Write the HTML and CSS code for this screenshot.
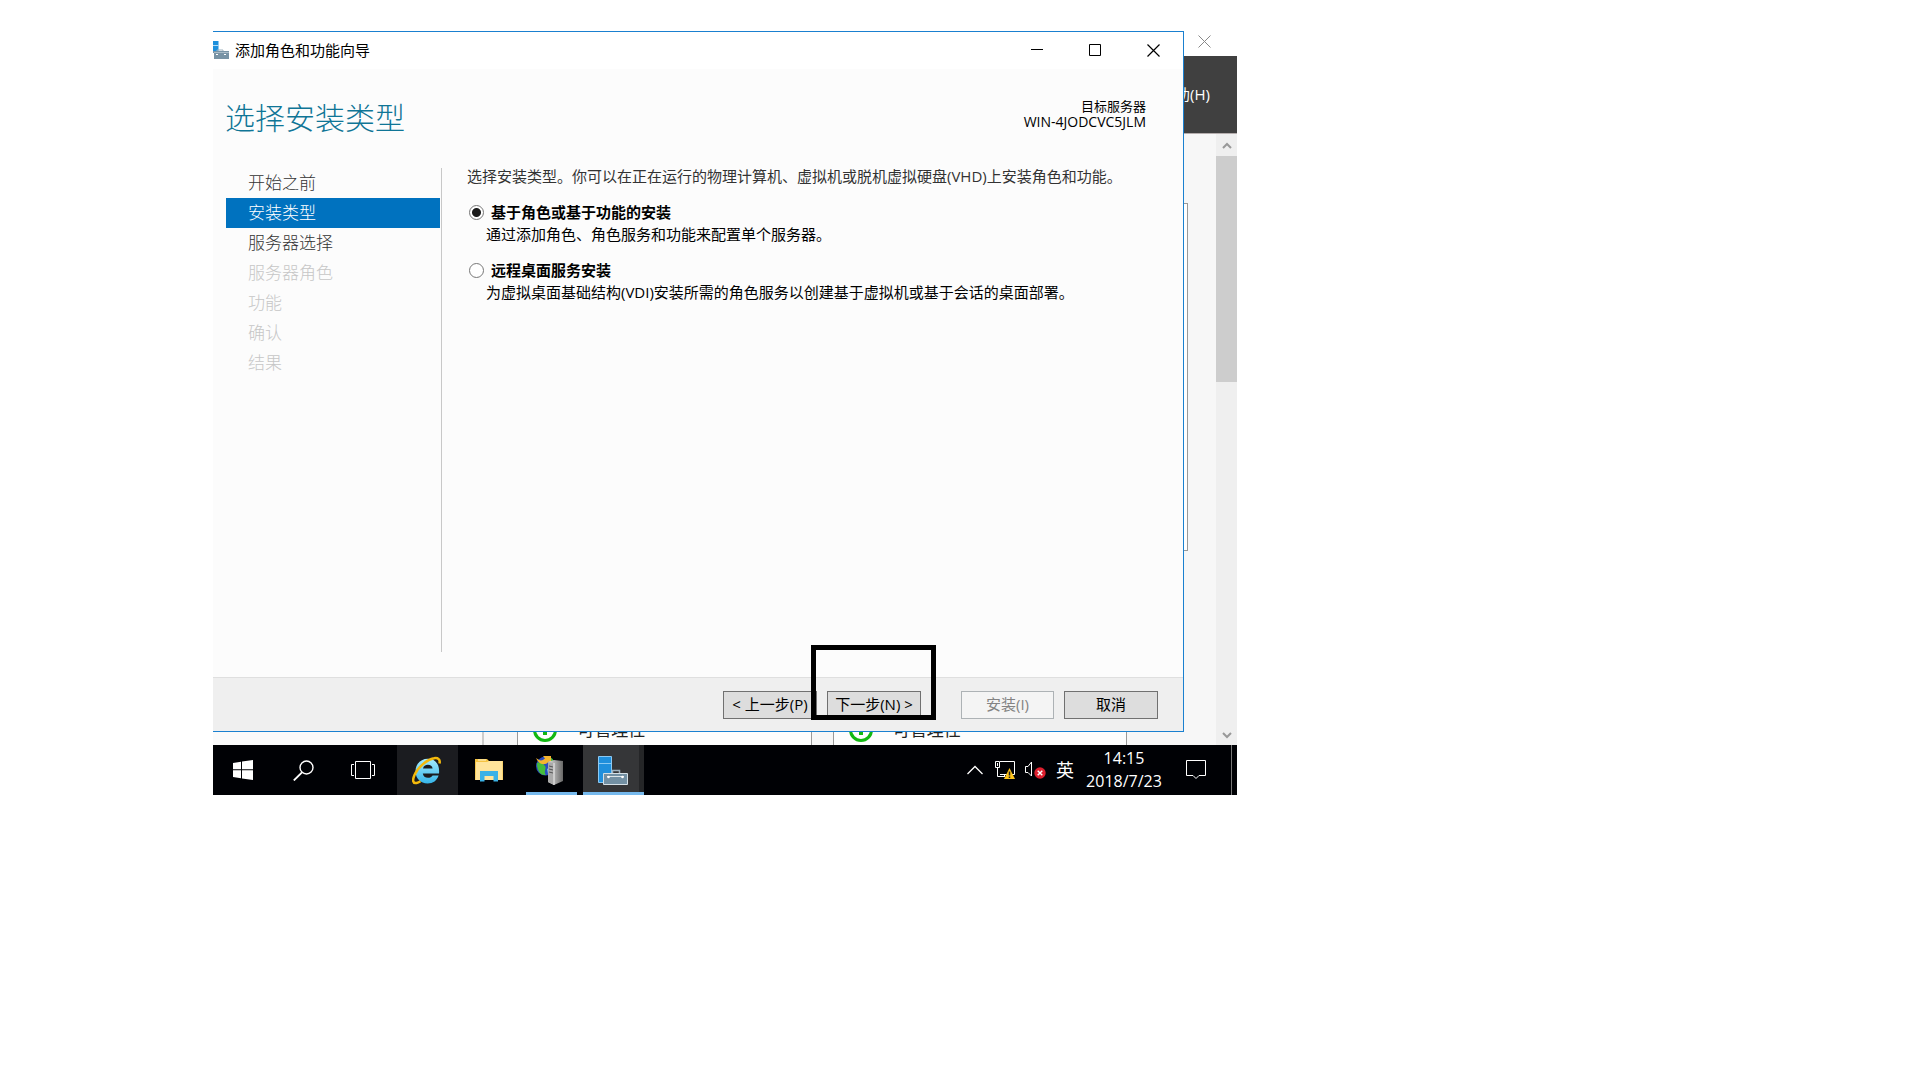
FILE: index.html
```html
<!DOCTYPE html>
<html lang="zh-CN">
<head>
<meta charset="utf-8">
<title>添加角色和功能向导</title>
<link rel="stylesheet" href="styles.css">
</head>
<body>
<main class="desktop">
  <div class="workspace">
    <section class="manager" aria-label="服务器管理器">
      <div class="manager-title">
        <button class="manager-close" aria-label="关闭"><svg width="13" height="13" viewBox="0 0 13 13"><path d="M.5.5l12 12M12.500.5l-12 12" stroke="#888" fill="none"/></svg></button>
      </div>
      <div class="manager-menu">帮助(H)</div>
      <div class="manager-main">
        <div class="manager-content">
          <div class="welcome"></div>
          <div class="tiles">
            <div class="tile-side"></div>
            <div class="tile"><svg width="24" height="24" viewBox="0 0 24 24"><circle cx="12" cy="12" r="10.500" fill="#fff" stroke="#12b812" stroke-width="3"/><path d="M12 6v11" stroke="#12b812" stroke-width="4"/></svg>可管理性</div>
            <div class="tile"><svg width="24" height="24" viewBox="0 0 24 24"><circle cx="12" cy="12" r="10.500" fill="#fff" stroke="#12b812" stroke-width="3"/><path d="M12 6v11" stroke="#12b812" stroke-width="4"/></svg>可管理性</div>
          </div>
        </div>
        <div class="scrollbar">
          <div class="scroll-arrow"><svg width="10" height="7" viewBox="0 0 10 7"><path d="M1 6l4-4 4 4" stroke="#999" stroke-width="2" fill="none"/></svg></div>
          <div class="scroll-thumb"></div>
          <div class="scroll-arrow scroll-down"><svg width="10" height="7" viewBox="0 0 10 7"><path d="M1 1l4 4 4-4" stroke="#999" stroke-width="2" fill="none"/></svg></div>
        </div>
      </div>
    </section>

    <section class="wizard">
      <div class="titlebar">
        <svg width="16" height="20" viewBox="0 0 16 20"><path d="M0 0h5.500v10H0z" fill="#1e90dc"/><path d="M0 4.500h5.500" stroke="#b5dcf5"/><path d="M4 10.500V9h6v1.500" stroke="#9db0bc" fill="none"/><path d="M0 10h16v8H1v-6H0z" fill="#7893a5"/><path d="M1 11.500h15" stroke="#a9bbc7"/><path d="M3 13.500h2M11 13.500h2" stroke="#fff"/></svg>
        <span class="title">添加角色和功能向导</span>
        <button class="chrome" aria-label="最小化"><svg width="13" height="13" viewBox="0 0 13 13"><path d="M0 5.500h12" stroke="#000"/></svg></button>
        <button class="chrome" aria-label="最大化"><svg width="13" height="13" viewBox="0 0 13 13"><path d="M.5.5h11v11H.5z" stroke="#000" fill="none"/></svg></button>
        <button class="chrome" aria-label="关闭"><svg width="13" height="13" viewBox="0 0 13 13"><path d="M.5.5l12 12M12.500.5l-12 12" stroke="#000" stroke-width="1.200" fill="none"/></svg></button>
      </div>
      <header class="head">
        <h1>选择安装类型</h1>
        <p class="target">目标服务器<br><span class="host">WIN-4JODCVC5JLM</span></p>
      </header>
      <div class="body">
        <nav class="steps">
          <a href="#before">开始之前</a>
          <a href="#type" class="current" aria-current="step">安装类型</a>
          <a href="#server">服务器选择</a>
          <a class="off" aria-disabled="true">服务器角色</a>
          <a class="off" aria-disabled="true">功能</a>
          <a class="off" aria-disabled="true">确认</a>
          <a class="off" aria-disabled="true">结果</a>
        </nav>
        <div class="content">
          <p class="intro">选择安装类型。你可以在正在运行的物理计算机、虚拟机或脱机虚拟硬盘(VHD)上安装角色和功能。</p>
          <div class="option">
            <label><input type="radio" name="type" checked>基于角色或基于功能的安装</label>
            <p>通过添加角色、角色服务和功能来配置单个服务器。</p>
          </div>
          <div class="option">
            <label><input type="radio" name="type">远程桌面服务安装</label>
            <p>为虚拟桌面基础结构(VDI)安装所需的角色服务以创建基于虚拟机或基于会话的桌面部署。</p>
          </div>
        </div>
      </div>
      <footer class="actions">
        <button class="btn">&lt; 上一步(P)</button>
        <div class="marked"><button class="btn">下一步(N) &gt;</button><span class="marker"></span></div>
        <button class="btn install" disabled>安装(I)</button>
        <button class="btn">取消</button>
      </footer>
    </section>
  </div>

  <div class="taskbar">
    <button class="task" aria-label="开始"><svg width="20" height="20" viewBox="0 0 20 20"><path d="M0 3l8-1.200V9.300H0zM9 1.600L20 0v9.300H9zM0 10.300h8v7.900L0 17zM9 10.300h11V20L9 18.400z" fill="#fff"/></svg></button>
    <button class="task" aria-label="搜索"><svg width="21" height="21" viewBox="0 0 21 21"><circle cx="13.500" cy="7.500" r="6.500" stroke="#fff" stroke-width="1.400" fill="none"/><path d="M9 12.300L.8 20.500" stroke="#fff" stroke-width="1.800"/></svg></button>
    <button class="task" aria-label="任务视图"><svg width="24" height="20" viewBox="0 0 24 20"><path d="M4.500 1.500h15v17h-15zM3 4.500H.5v11H3M21 4.500h2.500v11H21" stroke="#fff" fill="none"/></svg></button>
    <button class="task app hot first" aria-label="Internet Explorer"><svg width="30" height="30" viewBox="0 0 30 30"><defs><linearGradient id="ie" x1="0" y1="0" x2="0" y2="1"><stop offset="0" stop-color="#a5ebfd"/><stop offset="1" stop-color="#35b5ea"/></linearGradient></defs><path d="M27 18.500H10.800c.3 2.800 2.400 4.300 5.200 4.300 2 0 3.600-.8 4.600-2.300h6C25 25.500 21 28.500 15.600 28.500 8.500 28.500 3.500 23.500 3.500 16.300S8.800 3.800 15.800 3.800C23 3.800 28 9 27 18.500zM11 13.500h9.600c-.3-2.400-2.200-3.700-4.700-3.700s-4.400 1.300-4.900 3.700z" fill="url(#ie)"/><path d="M27.500 8.500c1-4-1.500-6-5.500-5.200C15 4.500 6 12 2.500 20c-2.400 5.500-1.500 8.700 2 8 1.500-.3 2.600-.9 4-1.800" fill="none" stroke="#f3b90c" stroke-width="2.500"/></svg></button>
    <button class="task app" aria-label="文件资源管理器"><svg width="28" height="24" viewBox="0 0 28 24"><path d="M0 1h12l2 2h14v19H0z" fill="#f5c342"/><path d="M1 4h11l2-1h13.500v19H.5z" fill="#ffe49b"/><path d="M3 2h8" stroke="#fff5cf"/><path d="M5 23.500V13h18v10.500h-4.500V18H9.500v5.500z" fill="#3ab1e6"/></svg></button>
    <button class="task app running" aria-label="IIS 管理器"><svg width="32" height="30" viewBox="0 0 32 30"><defs><linearGradient id="srv"><stop offset="0" stop-color="#e2e2e2"/><stop offset="1" stop-color="#686868"/></linearGradient></defs><circle cx="10.500" cy="11" r="9.500" fill="#2a4cc0"/><path d="M2 8c4-2 6 1 8 3s-2 6 1 9c-6 1-9-5-9-12zM11 2c4-1 8 2 8 6-4 0-6-3-8-6z" fill="#45bd3c"/><path d="M12 14l5-3v6l-4 2z" fill="#6cc4ee"/><path d="M1 3l3 2C6 6 8 5.500 10 3.500L8 1l8 0v7l-2-1.500C10 11 4 10 1 3z" fill="#f4b530"/><path d="M13 7l6-2 9 1v20l-9 4-6-3z" fill="url(#srv)"/><path d="M13 7l6 1v22l-6-3z" fill="#aaa"/><path d="M14 11l4 1M14 14l4 1M14 17l4 1" stroke="#555"/><path d="M19 8v22" stroke="#eee"/></svg></button>
    <button class="task app active" aria-label="服务器管理器"><svg width="30" height="30" viewBox="0 0 30 30"><path d="M.5 1.500h13v26H.5z" fill="#1f8fdc" stroke="#8bc9f2"/><path d="M1 8.500h13" stroke="#8bc9f2"/><path d="M14.500 18v-2.500h7V18" stroke="#9fb2bf" fill="none" stroke-width="1.500"/><path d="M5.500 18.500h24v11h-24z" fill="#7390a3" stroke="#d5e0e6"/><path d="M9 21.500h17" stroke="#dbe5ea"/><circle cx="10.500" cy="22" r="1.300" fill="#fff"/><circle cx="24.500" cy="22" r="1.300" fill="#fff"/></svg></button>
    <div class="tray">
      <svg width="16" height="10" viewBox="0 0 16 10"><path d="M.5 9L8 1.500 15.500 9" stroke="#fff" stroke-width="1.300" fill="none"/></svg>
      <svg class="net" width="20" height="18" viewBox="0 0 20 18"><path d="M5 .5h14.500v13H5M.5.5h4v6h-4zM2.500 2v3M2.500 6v9.500H9M9.500 13v3" stroke="#fff" fill="none"/><path d="M14.500 7L20 18H9z" fill="#fcc21b"/><path d="M14.500 10.500v4M14.500 15.500v1.500" stroke="#222" stroke-width="1.500"/></svg>
      <svg class="vol" width="21" height="18" viewBox="0 0 21 18"><path d="M.5 5.500H3L6.500 1v14L3 11.500H.5z" stroke="#fff" fill="none"/><circle cx="15" cy="12" r="5.700" fill="#dc1f2e"/><path d="M12.700 9.700l4.600 4.600M17.300 9.700l-4.600 4.600" stroke="#fff" stroke-width="1.400"/></svg>
      <span class="ime">英</span>
      <div class="clock">14:15<br>2018/7/23</div>
      <svg class="note" width="20" height="20" viewBox="0 0 20 20"><path d="M.5.500h19v15h-6.500l-3 3-3-3H.5z" stroke="#fff" fill="none"/></svg>
      <span class="peek"></span>
    </div>
  </div>
</main>
</body>
</html>
```
FILE: styles.css
```css
* { box-sizing: border-box; }

body {
  margin: 0;
  background: #fff;
  color: #000;
  display: grid;
  grid-template-columns: 213fr 1024fr 683fr;
  font: 15px/22px "Open Sans", "Noto Sans CJK SC", sans-serif;
}

h1, p { margin: 0; font-weight: inherit; }

button {
  font: inherit;
  color: inherit;
  border: 0;
  padding: 0;
  background: none;
}

svg { display: block; flex: none; }

.desktop { grid-column: 2; min-width: 0; }

.workspace { position: relative; padding: 31px 53px 13px 0; }

/* Server Manager, behind the wizard */
.manager {
  position: absolute;
  inset: 0;
  display: flex;
  flex-direction: column;
  overflow: hidden;
}

.manager-title {
  height: 56px;
  flex: none;
  display: flex;
  justify-content: flex-end;
  padding: 35px 26px 0 0;
}

.manager-close { height: 13px; }

.manager-menu {
  height: 78px;
  flex: none;
  display: flex;
  align-items: center;
  justify-content: flex-end;
  padding: 0 27px 2px 0;
  background: #404040;
  border-bottom: 1px solid #b5aeae;
  color: #fff;
}

.manager-main { flex: 1; display: flex; min-height: 0; background: #f7f7f7; }

.manager-content {
  flex: 1;
  display: flex;
  flex-direction: column;
  padding: 69px 28px 0 0;
  overflow: hidden;
}

.welcome {
  height: 348px;
  flex: none;
  border: 1px solid #999;
  border-left: 0;
  background: #fff;
}

.tiles {
  flex: none;
  height: 200px;
  margin-top: 50px;
  padding-right: 61px;
  display: grid;
  grid-template-columns: 283fr 294fr 294fr;
  gap: 21px;
}

.tile-side { border-right: 2px solid #ccc; margin-right: 12px; background: #fafafa; }

.tile {
  border: 1px solid #999;
  background: #fdfdfd;
  display: flex;
  align-items: flex-start;
  gap: 20px;
  padding: 116px 0 0 15px;
  font-size: 17px;
  line-height: 24px;
  color: #222;
}

.scrollbar { width: 21px; display: flex; flex-direction: column; background: #efefef; }

.scroll-arrow { height: 22px; display: flex; align-items: center; justify-content: center; }

.scroll-thumb { height: 226px; background: #cdcdcd; }

.scroll-down { margin-top: auto; height: 20px; }

/* Wizard window */
.wizard {
  position: relative;
  background: #fcfcfc;
  border: 1px solid #1a80d0;
  border-left: 0;
}

.titlebar { height: 37px; display: flex; align-items: center; padding-right: 1px; background: #fff; }

.title { flex: 1; padding: 0 0 2px 6px; }

.chrome { width: 58px; height: 37px; display: flex; align-items: center; justify-content: center; }

.head { display: flex; justify-content: space-between; padding: 29px 37px 31px 12px; }

.head h1 { font-size: 30px; line-height: 36px; font-weight: 300; color: #0f7596; font-family: "Noto Sans CJK SC", sans-serif; }

.target { font-size: 13px; line-height: 16px; text-align: right; }

.host { font-size: 14px; }

.body { display: flex; min-height: 512px; padding: 0 25px 25px 13px; }

.steps {
  flex: none;
  width: 216px;
  margin-top: 3px;
  padding-right: 1px;
  border-right: 1px solid #c8c8c8;
  font-size: 17px;
  line-height: 30px;
  font-weight: 300;
}

.steps a { display: block; padding-left: 22px; color: #333; text-decoration: none; }
.steps .current { background: #0072bf; color: #fff; }
.steps .off { color: #c6c6c6; }

.content { flex: 1; display: flex; flex-direction: column; gap: 14px; padding-left: 25px; }

.intro { color: #333; }

.option label { display: flex; align-items: center; gap: 7px; padding-left: 2px; font-weight: 700; }

.option p { padding-left: 19px; }

.option input {
  appearance: none;
  width: 15px;
  height: 15px;
  margin: 0;
  border: 1px solid #777;
  border-radius: 50%;
  background: #fff;
}

.option input:checked { background: radial-gradient(circle, #1c1c1c 4px, #fff 5px); }

.actions {
  display: flex;
  justify-content: flex-end;
  gap: 10px;
  padding: 13px 25px 12px;
  background: #efefef;
  border-top: 1px solid #dfdfdf;
}

.btn { width: 94px; height: 28px; padding-bottom: 2px; border: 1px solid #707070; background: #ddd; white-space: nowrap; line-height: 24px; }

.install { width: 93px; margin-left: 30px; color: #838383; border-color: #adb2b5; background: #f4f4f4; }

.marked { position: relative; }

.marker { position: absolute; inset: -46px -15px -1px -16px; border: 5px solid #000; pointer-events: none; }

/* Taskbar */
.taskbar { position: relative; height: 50px; display: flex; background: #000105; color: #fff; }

.task { width: 60px; display: flex; align-items: center; justify-content: center; }

.app { width: 61px; margin-right: 1px; padding-right: 2px; }
.first { margin-left: 4px; }
.hot { background: #1b1c20; }
.running { background: linear-gradient(#76b9ed, #76b9ed) center bottom / 51px 3px no-repeat; }
.active { background: linear-gradient(#76b9ed, #76b9ed) center bottom / 100% 3px no-repeat, linear-gradient(90deg, #353638 56px, #252628 56px); }

.tray { margin-left: auto; display: flex; align-items: center; }

.net { margin-left: 12px; }
.vol { margin: 0 10px; }
.ime { font-size: 18px; }
.clock { width: 100px; text-align: center; font-size: 16px; line-height: 23px; }
.note { margin: 0 25px 0 12px; }
.peek { width: 1px; height: 50px; margin-right: 5px; background: #777; }
```
